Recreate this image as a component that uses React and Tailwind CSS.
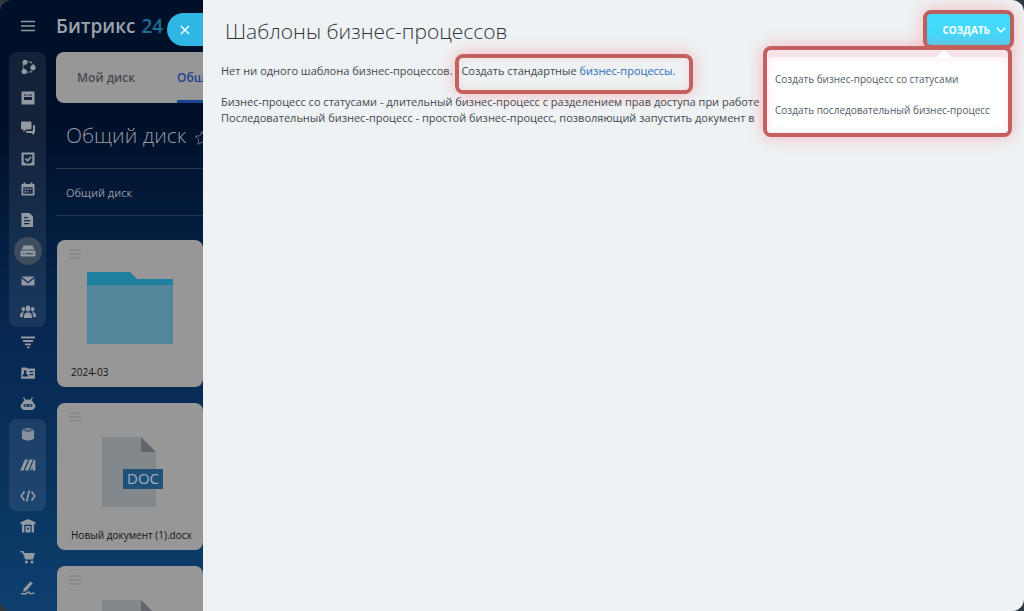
// App.jsx
import React, { useState } from 'react';

const Icon = ({ children, className = '' }) => (
  <svg viewBox="0 0 16 16" className={`h-4 w-4 ${className}`} fill="currentColor" aria-hidden="true">
    {children}
  </svg>
);

const icons = {
  collab: (
    <Icon>
      <circle cx="8.500" cy="8" r="5.300" fill="none" stroke="currentColor" strokeWidth="1.500" strokeDasharray="3 1.200" opacity=".8" />
      <circle cx="5" cy="3.200" r="2.500" />
      <circle cx="13" cy="8.600" r="2.600" />
      <circle cx="4.200" cy="12.500" r="2.600" />
    </Icon>
  ),
  feed: (
    <Icon>
      <path fillRule="evenodd" d="M1.5 1.5h13v13h-13zM4 4.5v1h3v-1zM8 4.5v1h4v-1zM4 7v3h8V7z" />
    </Icon>
  ),
  chat: (
    <Icon>
      <path d="M2 1.5h8.500a1 1 0 0 1 1 1V8.500a1 1 0 0 1-1 1H6L3.500 12V9.500H2a1 1 0 0 1-1-1V2.500a1 1 0 0 1 1-1z" />
      <path d="M13 5h1a1 1 0 0 1 1 1v6a1 1 0 0 1-1 1v2.200L11.500 13H7a1 1 0 0 1-1-1v-1h6a1 1 0 0 0 1-1z" />
    </Icon>
  ),
  tasks: (
    <Icon>
      <path fillRule="evenodd" d="M3 1.500h10.500a1 1 0 0 1 1 1v11a1 1 0 0 1-1 1H2.500a1 1 0 0 1-1-1v-11a1 1 0 0 1 1-1zM3.700 3.600v7.100l2 1.900h4.600l2-1.900V3.600z" />
      <path d="M5.300 7.500l2.200 2.200 3.500-3.700" fill="none" stroke="currentColor" strokeWidth="1.700" />
    </Icon>
  ),
  calendar: (
    <Icon>
      <path fillRule="evenodd" d="M1.500 3h2V1.500h2V3h5V1.500h2V3h2v11.500h-13zM3.300 6.300v6.500h9.400V6.300z" />
      <path d="M7 7.500h1.500V9H7zM9.700 7.500h1.500V9H9.700zM4.500 10h1.500v1.500H4.500zM7 10h1.500v1.500H7zM4.500 7.500H6V9H4.500z" />
    </Icon>
  ),
  docs: (
    <Icon>
      <path fillRule="evenodd" d="M1.500 1h8L13 4.500V15H1.500zM4 5v1.300h4V5zM4 8v1.300h6.500V8zM4 11v1.300h5.500V11z" />
    </Icon>
  ),
  disk: (
    <Icon>
      <path d="M4.500 2.500h7a1.500 1.500 0 0 1 1.400.9l1.500 3.100H1.600l1.500-3.100a1.500 1.500 0 0 1 1.400-.9z" />
      <path fillRule="evenodd" d="M1.500 7.500h13a1 1 0 0 1 1 1v4a1 1 0 0 1-1 1h-13a1 1 0 0 1-1-1v-4a1 1 0 0 1 1-1zM3 10v1.300h1.500V10zM6 10v1.300h7V10z" />
    </Icon>
  ),
  mail: (
    <Icon>
      <path d="M1.500 3.500h13L8 8.800z" />
      <path d="M1.500 5.200L8 10.400l6.500-5.200v7.300h-13z" />
    </Icon>
  ),
  groups: (
    <Icon>
      <ellipse cx="8" cy="4.500" rx="2.400" ry="2.900" />
      <ellipse cx="3.300" cy="5.300" rx="1.700" ry="2.200" />
      <ellipse cx="12.700" cy="5.300" rx="1.700" ry="2.200" />
      <path d="M4 14c0-4 .8-5.500 4-5.500s4 1.500 4 5.500zM0 13c0-3.500.8-4.800 3.900-4.800C3 9.300 2.900 11 2.900 13zM16 13c0-3.500-.8-4.800-3.900-4.800.9 1.100 1 2.800 1 4.800z" />
    </Icon>
  ),
  crm: (
    <Icon>
      <path d="M1 2.500h14v2H1zM3 6h10v2H3zM5 9.500h6v1.800H5zM7 12.600h2.500v1.600H7z" />
    </Icon>
  ),
  contact: (
    <Icon>
      <path fillRule="evenodd" d="M1.500 2.500h5l1 1h7.500v10.200H1zM2.500 11.500h5.500c0-2-.8-2.300-1.900-2.700V8c.6-.5.700-3-.9-3s-1.500 2.500-.9 3v.8c-1.100.4-1.800.7-1.800 2.700zM9.500 6v1.300h4V6zM9.500 9v1.300h4V9z" />
    </Icon>
  ),
  robot: (
    <Icon>
      <path d="M3.500 1.500l1.800 3M12.500 1.500l-1.800 3" fill="none" stroke="currentColor" strokeWidth="1.400" />
      <path fillRule="evenodd" d="M8 3.500c3.500 0 5.500 2 6 4.500h1.200v4H14.500c-.5 1.500-2 2-3.500 2H5c-1.500 0-3-.5-3.500-2H.8V8H2c.5-2.500 2.500-4.500 6-4.500zM4.500 8.300c-1.200 0-1.600 2.400 0 2.400h7c1.600 0 1.200-2.400 0-2.400z" />
      <path d="M5.200 8.700h1.500v1.600H5.200zM9.300 8.700h1.500v1.600H9.300z" />
    </Icon>
  ),
  box: (
    <Icon>
      <path d="M8 1.500l6 1.800-6 2-6-2z" opacity=".6" />
      <path d="M2 4l6 2 6-2v8c0 1-.6 1.500-6 2.800-5.400-1.300-6-1.800-6-2.800z" opacity=".9" />
    </Icon>
  ),
  market: (
    <Icon>
      <path d="M4.800 2.500h3.200L3.500 13.500H.3zM9.500 2.500h3.200L8.200 13.500H5zM14 2.500l1.300.6v10.400h-2.600l-.4-3.200-1.300 3.200H9.700z" />
    </Icon>
  ),
  code: (
    <Icon>
      <path d="M4.500 3.500L1.200 8l3.300 4.500M11.500 3.500L14.800 8l-3.300 4.500M9.300 2.500L6.700 13.500" fill="none" stroke="currentColor" strokeWidth="1.800" />
    </Icon>
  ),
  warehouse: (
    <Icon>
      <path fillRule="evenodd" d="M8 1l7.500 3.300v2H14v8.200H2V6.300H.5v-2zM4.300 6.800v7.700h7.400V6.800z" />
      <path fillRule="evenodd" d="M5.500 8h5v6.500h-5zM7.200 9.700v2h1.600v-2z" />
    </Icon>
  ),
  cart: (
    <Icon>
      <path d="M.5 2h3l.8 2H15l-2 6.500H5.300L2.500 3.500h-2z" />
      <circle cx="6.300" cy="13" r="1.500" />
      <circle cx="12" cy="13" r="1.500" />
    </Icon>
  ),
  sign: (
    <Icon>
      <path d="M10.500 1.500l2.300 1.800-6.300 7.500-3.300 1.500.5-3.500z" />
      <path d="M1 13.800h4.500c1.500 0 1.500-1.800 3-1.800s1 1.800 2.500 1.800 1.500-.8 3.500-.8" fill="none" stroke="currentColor" strokeWidth="1.500" />
    </Icon>
  ),
};

const menuGroups = [
  {
    id: 'main',
    className: 'h-[275px] rounded-lg bg-white/8',
    items: [
      ['collab', 'Коллабы'],
      ['feed', 'Новости'],
      ['chat', 'Чат'],
      ['tasks', 'Задачи'],
      ['calendar', 'Календарь'],
      ['docs', 'Документы'],
      ['disk', 'Диск'],
      ['mail', 'Почта'],
      ['groups', 'Группы'],
    ],
  },
  {
    id: 'crm',
    className: 'h-[92px]',
    items: [
      ['crm', 'CRM'],
      ['contact', 'Сотрудники'],
      ['robot', 'Автоматизация'],
    ],
  },
  {
    id: 'market',
    className: 'h-[92px] rounded-lg bg-white/8',
    items: [
      ['box', 'Каталог'],
      ['market', 'Маркет'],
      ['code', 'Разработчикам'],
    ],
  },
  {
    id: 'shop',
    className: 'h-[92px]',
    items: [
      ['warehouse', 'Склад'],
      ['cart', 'Магазин'],
      ['sign', 'Подпись'],
    ],
  },
];

const files = [
  { name: '2024-03', type: 'folder' },
  { name: 'Новый документ (1).docx', type: 'doc' },
  { name: 'Новый документ.docx', type: 'doc' },
];

const Lines = ({ className }) => (
  <svg viewBox="0 0 14 12" className={className} stroke="currentColor" aria-hidden="true">
    <path d="M0 1.500h14M0 6h14M0 10.500h14" fill="none" strokeWidth="1.500" />
  </svg>
);

const FolderPicture = () => (
  <svg viewBox="0 0 86 72" className="h-[72px] w-[86px]" aria-hidden="true">
    <path d="M0 0h43l7 7h36v20H0z" fill="#1f7f9f" />
    <path d="M0 13h86v59H0z" fill="#53869a" />
  </svg>
);

const DocPicture = () => (
  <svg viewBox="0 0 62 70" className="h-[70px] w-[62px]" aria-hidden="true">
    <path d="M0 0h39l15 15v55H0z" fill="#83888d" />
    <path d="M39 0l15 15H39z" fill="#62666b" />
    <path d="M21 32h40v20H21z" fill="#215079" />
    <text x="41" y="47" textAnchor="middle" fontSize="15" fill="#a3b1bf">
      DOC
    </text>
  </svg>
);

const FileCard = ({ file }) => (
  <li className="flex h-[147px] shrink-0 flex-col rounded-lg bg-[#979797] px-3 pt-2 pb-1 text-[#141414]">
    <button type="button" aria-label="Действия" className="h-3 w-4 text-[#858585]">
      <Lines className="h-3 w-3" />
    </button>
    <div className={file.type === 'folder' ? 'mt-3 flex h-[92px] justify-center' : 'mt-3.5 flex h-[90px] justify-center pl-1.5'}>
      {file.type === 'folder' ? <FolderPicture /> : <DocPicture />}
    </div>
    <span className="pl-0.5 text-[10px] leading-4 font-medium whitespace-nowrap">{file.name}</span>
  </li>
);

const Sidebar = () => (
  <nav className="flex w-14 shrink-0 flex-col pr-[10px] pl-[9px] text-[#9399a3]">
    <button type="button" aria-label="Меню" className="flex h-[52px] shrink-0 items-center justify-center">
      <Lines className="h-3 w-3.5" />
    </button>
    {menuGroups.map((group) => (
      <ul key={group.id} className={`flex shrink-0 flex-col items-center justify-around ${group.className}`}>
        {group.items.map(([icon, label]) => (
          <li key={icon} className="flex h-7 items-center">
            <a
              href="#"
              aria-label={label}
              className={
                icon === 'disk'
                  ? 'flex h-7 w-7 items-center justify-center rounded-full bg-[#3d4c5f]'
                  : 'flex h-7 w-7 items-center justify-center'
              }
            >
              {icons[icon]}
            </a>
          </li>
        ))}
      </ul>
    ))}
  </nav>
);

const DiskPage = () => (
  <div className="flex w-[147px] shrink-0 flex-col overflow-hidden whitespace-nowrap">
    <div className="flex h-[52px] shrink-0 items-center gap-1.5 text-[19px] font-semibold text-[#9da3ad]">
      Битрикс <span className="text-[#1f6f93]">24</span>
    </div>
    <nav className="flex h-[51px] shrink-0 gap-[42px] overflow-hidden rounded-l-lg bg-[#979797] pl-[21px] text-xs font-semibold text-[#45484d]">
      <a href="#" className="flex shrink-0 items-center">Мой диск</a>
      <a href="#" className="flex min-w-0 flex-1 items-center overflow-hidden border-b-3 border-[#1b4391] pt-[3px] text-[#1b4391]">Общий диск</a>
    </nav>
    <div className="mt-px flex h-16 shrink-0 items-center gap-2 pl-2.5">
      <h2 className="text-[21px] font-light text-[#959ba5]">Общий диск</h2>
      <svg viewBox="0 0 18 18" className="mt-1 h-4 w-4 shrink-0 text-[#737b88]" fill="none" stroke="currentColor" aria-hidden="true">
        <path d="M9 1.500l2.300 4.900 5.200.7-3.800 3.700.9 5.300L9 13.600l-4.600 2.500.9-5.300L1.500 7.100l5.200-.7z" />
      </svg>
    </div>
    <div className="flex h-12 shrink-0 items-center border-y border-[#27374e] pt-0.5 pl-2.5 text-[11px] text-[#959ba5]">
      Общий диск
    </div>
    <ul className="mt-6 flex flex-col gap-4 pl-px">
      {files.map((file) => (
        <FileCard key={file.name} file={file} />
      ))}
    </ul>
  </div>
);

const CreateMenu = ({ open, onToggle }) => (
  <div className="relative z-10">
    <button
      type="button"
      onClick={onToggle}
      aria-expanded={open}
      className="flex h-[39px] w-[91px] items-center justify-end gap-1.5 rounded-lg border-4 border-[#b9605f] bg-[#42d9fb] pr-1 text-[10px] font-bold text-white shadow-[0_0_16px_rgba(255,90,100,0.4)]"
    >
      СОЗДАТЬ
      <svg viewBox="0 0 10 6" className="h-1.5 w-2.5" fill="none" stroke="currentColor" strokeWidth="1.500" aria-hidden="true">
        <path d="M.8.8L5 5 9.200.8" />
      </svg>
    </button>
    {open && (
      <div className="absolute top-9 right-0.5 w-[249px] rounded-lg border-4 border-[#c4605d] bg-[#f6e4e9] pt-[7px] shadow-[0_0_16px_rgba(255,90,100,0.4)]">
        <svg viewBox="0 0 16 8" className="absolute top-0 right-[56px] h-2 w-4" fill="#ffffff" aria-hidden="true">
          <path d="M0 8l8-8 8 8z" />
        </svg>
        <ul className="flex flex-col rounded-b-sm bg-white pt-1.5 pb-2 text-[10px] whitespace-nowrap text-[#525c69] shadow-[inset_0_0_8px_rgba(255,120,130,0.2)]">
          <li>
            <button type="button" className="block h-[31px] px-2">Создать бизнес-процесс со статусами</button>
          </li>
          <li>
            <button type="button" className="block h-[31px] px-2">Создать последовательный бизнес-процесс</button>
          </li>
        </ul>
      </div>
    )}
  </div>
);

const App = () => {
  const [menuOpen, setMenuOpen] = useState(true);

  return (
    <div className="h-screen w-full overflow-hidden bg-[#30383f] font-['Open_Sans','Noto_Sans',sans-serif]">
      <div className="flex h-full overflow-hidden rounded-xl bg-linear-to-b from-[#001029] from-20% via-[#06254d] via-50% to-[#0e3f6e]">
        <Sidebar />
        <DiskPage />
        <main className="relative min-w-0 flex-1 bg-[#eef2f4] text-[11px] leading-4 text-[#43474c]">
          <button
            type="button"
            aria-label="Закрыть"
            className="absolute top-[13px] right-full flex h-[33px] w-9 items-center justify-center rounded-l-full bg-[#2fb6e4] text-white"
          >
            <svg viewBox="0 0 10 10" className="h-2.5 w-2.5" stroke="currentColor" strokeWidth="1.400" aria-hidden="true">
              <path d="M1 1l8 8M9 1L1 9" />
            </svg>
          </button>
          <header className="flex h-[62px] items-start justify-between pt-2.5 pr-2.5 pl-[22px]">
            <h1 className="text-[21px] leading-[42px] font-light text-[#333639]">Шаблоны бизнес-процессов</h1>
            <CreateMenu open={menuOpen} onToggle={() => setMenuOpen(!menuOpen)} />
          </header>
          <div className="pl-[18px] whitespace-nowrap">
            <p className="pt-px">
              Нет ни одного шаблона бизнес-процессов.{' '}
              <span className="relative ml-1.5 inline-block">
                <span className="pointer-events-none absolute -top-[9px] -right-[18px] -bottom-[15px] -left-[6px] rounded-lg border-4 border-[#c4605d] shadow-[0_0_16px_rgba(255,90,100,0.4),inset_0_0_10px_rgba(255,90,100,0.15)]" />
                Создать стандартные <a href="#" className="text-[#2f6db5]">бизнес-процессы.</a>
              </span>
            </p>
            <p className="mt-[15px]">Бизнес-процесс со статусами - длительный бизнес-процесс с разделением прав доступа при работе</p>
            <p>Последовательный бизнес-процесс - простой бизнес-процесс, позволяющий запустить документ в</p>
          </div>
        </main>
      </div>
    </div>
  );
};

export default App;
